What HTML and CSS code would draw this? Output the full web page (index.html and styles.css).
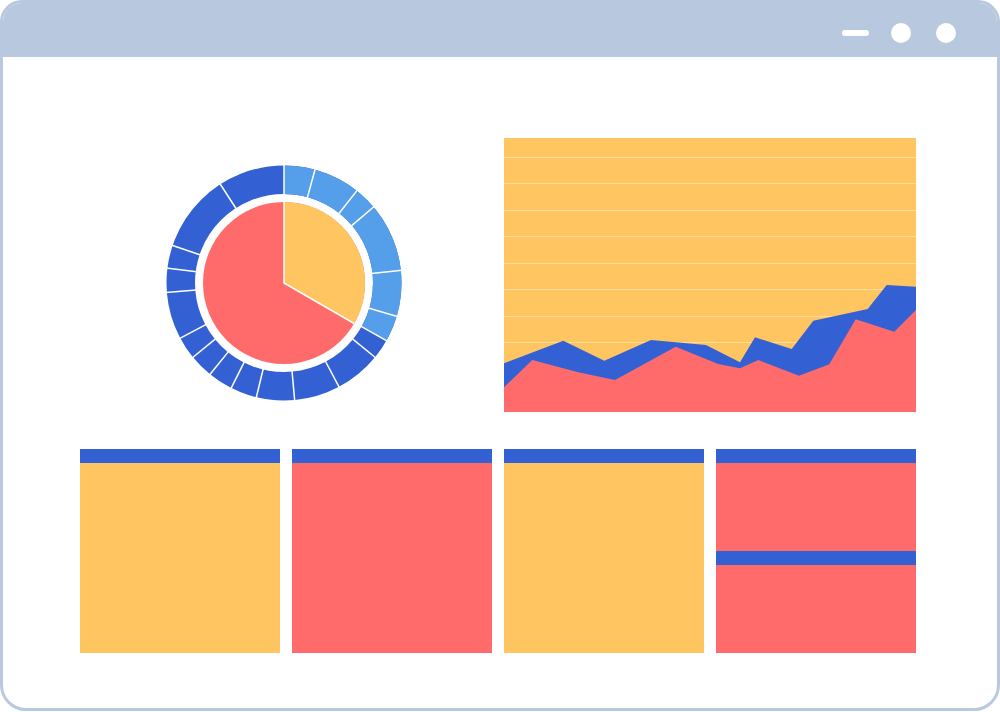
FILE: index.html
```html
<!DOCTYPE html>
<html>
  <head>
    <title>Dashboard Window</title>
    <meta name="viewport" content="width=device-width, initial-scale=1.0" />
    <link rel="stylesheet" href="styles.css">
  </head>

  <body>
    <div class="window">
      <!-- Title bar with window controls -->
      <div class="title-bar">
        <span class="ctrl-min"></span>
        <span class="ctrl-dot"></span>
        <span class="ctrl-dot"></span>
      </div>

      <div class="content">
        <div class="top-row">
          <div class="donut-cell">
            <svg class="donut" width="236" height="236" viewBox="-118 -118 236 236">
              <circle r="103.25" fill="none" stroke="#3361d3" stroke-width="28.5" />
              <circle r="103.25" fill="none" stroke="#559ee9" stroke-width="28.5"
                      stroke-dasharray="215.1 1000" transform="rotate(-90)" />
              <g stroke="#fff" stroke-width="1.5">
                <line x1="0" y1="-88" x2="0" y2="-119" transform="rotate(0)" />
                <line x1="0" y1="-88" x2="0" y2="-119" transform="rotate(15.3)" />
                <line x1="0" y1="-88" x2="0" y2="-119" transform="rotate(38.3)" />
                <line x1="0" y1="-88" x2="0" y2="-119" transform="rotate(49.7)" />
                <line x1="0" y1="-88" x2="0" y2="-119" transform="rotate(83.8)" />
                <line x1="0" y1="-88" x2="0" y2="-119" transform="rotate(106.5)" />
                <line x1="0" y1="-88" x2="0" y2="-119" transform="rotate(119.4)" />
                <line x1="0" y1="-88" x2="0" y2="-119" transform="rotate(129.2)" />
                <line x1="0" y1="-88" x2="0" y2="-119" transform="rotate(152.1)" />
                <line x1="0" y1="-88" x2="0" y2="-119" transform="rotate(174.8)" />
                <line x1="0" y1="-88" x2="0" y2="-119" transform="rotate(193.6)" />
                <line x1="0" y1="-88" x2="0" y2="-119" transform="rotate(206.7)" />
                <line x1="0" y1="-88" x2="0" y2="-119" transform="rotate(219)" />
                <line x1="0" y1="-88" x2="0" y2="-119" transform="rotate(230.8)" />
                <line x1="0" y1="-88" x2="0" y2="-119" transform="rotate(242)" />
                <line x1="0" y1="-88" x2="0" y2="-119" transform="rotate(265.4)" />
                <line x1="0" y1="-88" x2="0" y2="-119" transform="rotate(277.3)" />
                <line x1="0" y1="-88" x2="0" y2="-119" transform="rotate(288.6)" />
                <line x1="0" y1="-88" x2="0" y2="-119" transform="rotate(327.2)" />
              </g>
              <!-- Pie in the middle -->
              <circle r="81" fill="#ff6b6b" />
              <path d="M0 0 V-81 A81 81 0 0 1 70.15 40.5 Z" fill="#ffc560" />
              <path d="M0 -81 V0 L70.15 40.5" fill="none" stroke="#fff" stroke-width="1.5" />
            </svg>
          </div>

          <div class="chart-cell">
            <svg class="area-chart" width="412" height="274" viewBox="0 0 412 274">
              <rect width="412" height="274" fill="#ffc560" />
              <g stroke="#ffdc9c" stroke-width="1">
                <line x1="0" y1="19.5" x2="412" y2="19.5" />
                <line x1="0" y1="45.5" x2="412" y2="45.5" />
                <line x1="0" y1="72.5" x2="412" y2="72.5" />
                <line x1="0" y1="98.5" x2="412" y2="98.5" />
                <line x1="0" y1="125.5" x2="412" y2="125.5" />
                <line x1="0" y1="151.5" x2="412" y2="151.5" />
                <line x1="0" y1="178.5" x2="412" y2="178.5" />
                <line x1="0" y1="204.5" x2="412" y2="204.5" />
              </g>
              <polygon fill="#3361d3"
                       points="0,225.3 59.3,202.7 100.3,222.7 147,202 202,207 236,224.3 251,199.3 287.7,211 309.3,182.7 363.7,171 382.7,147 412,148.7 412,274 0,274" />
              <polygon fill="#ff6b6b"
                       points="0,249.3 28.3,222 74.3,234.3 111,242 171.7,208.7 214.3,226 236,230.3 254.3,222 295,237.7 325.3,226.3 351.7,181.3 390.3,193.7 412,172 412,274 0,274" />
            </svg>
          </div>
        </div>

        <div class="card-row">
          <div class="card card-yellow"></div>
          <div class="card card-red"></div>
          <div class="card card-yellow"></div>
          <div class="card card-split">
            <div class="split-part"></div>
            <div class="split-part"></div>
          </div>
        </div>
      </div>
    </div>
  </body>
</html>
```

FILE: styles.css
```css
/* Browser window mockup */
body {
  margin: 0;
  padding: 0;
  background-color: #fff;
  font-family: "Liberation Sans", Arial, sans-serif;
}

.window {
  width: 1000px;
  height: 711px;
  box-sizing: border-box;
  border: 3px solid #b8c8de;
  border-radius: 22px 22px 26px 26px;
  overflow: hidden;
  background-color: #fff;
}

.title-bar {
  height: 54px;
  box-sizing: border-box;
  padding: 6px 41px 0 0;
  background-color: #b8c8de;
  display: flex;
  align-items: center;
  justify-content: flex-end;
  gap: 22px;
}

.ctrl-min {
  width: 27px;
  height: 6px;
  border-radius: 3px;
  background-color: #fff;
}

.ctrl-dot {
  width: 20px;
  height: 20px;
  border-radius: 50%;
  background-color: #fff;
}

.ctrl-dot + .ctrl-dot {
  margin-left: 3px;
}

.content {
  padding: 81px 81px 0 77px;
}

.top-row {
  display: grid;
  grid-template-columns: 412px 412px;
  column-gap: 12px;
  height: 274px;
}

.donut-cell {
  display: flex;
  justify-content: center;
  align-items: flex-end;
  padding: 0 5px 11px 0;
}

.donut,
.area-chart {
  display: block;
}

.card-row {
  margin-top: 37px;
  display: grid;
  grid-template-columns: repeat(4, 1fr);
  column-gap: 11.4px;
  height: 204px;
}

.card {
  border-top: 14px solid #3361d3;
}

.card-yellow {
  background-color: #ffc560;
}

.card-red {
  background-color: #ff6b6b;
}

.card-split {
  display: flex;
  flex-direction: column;
  background-color: #ff6b6b;
}

.split-part {
  height: 88px;
}

.split-part + .split-part {
  flex: 1;
  border-top: 14px solid #3361d3;
}
```
